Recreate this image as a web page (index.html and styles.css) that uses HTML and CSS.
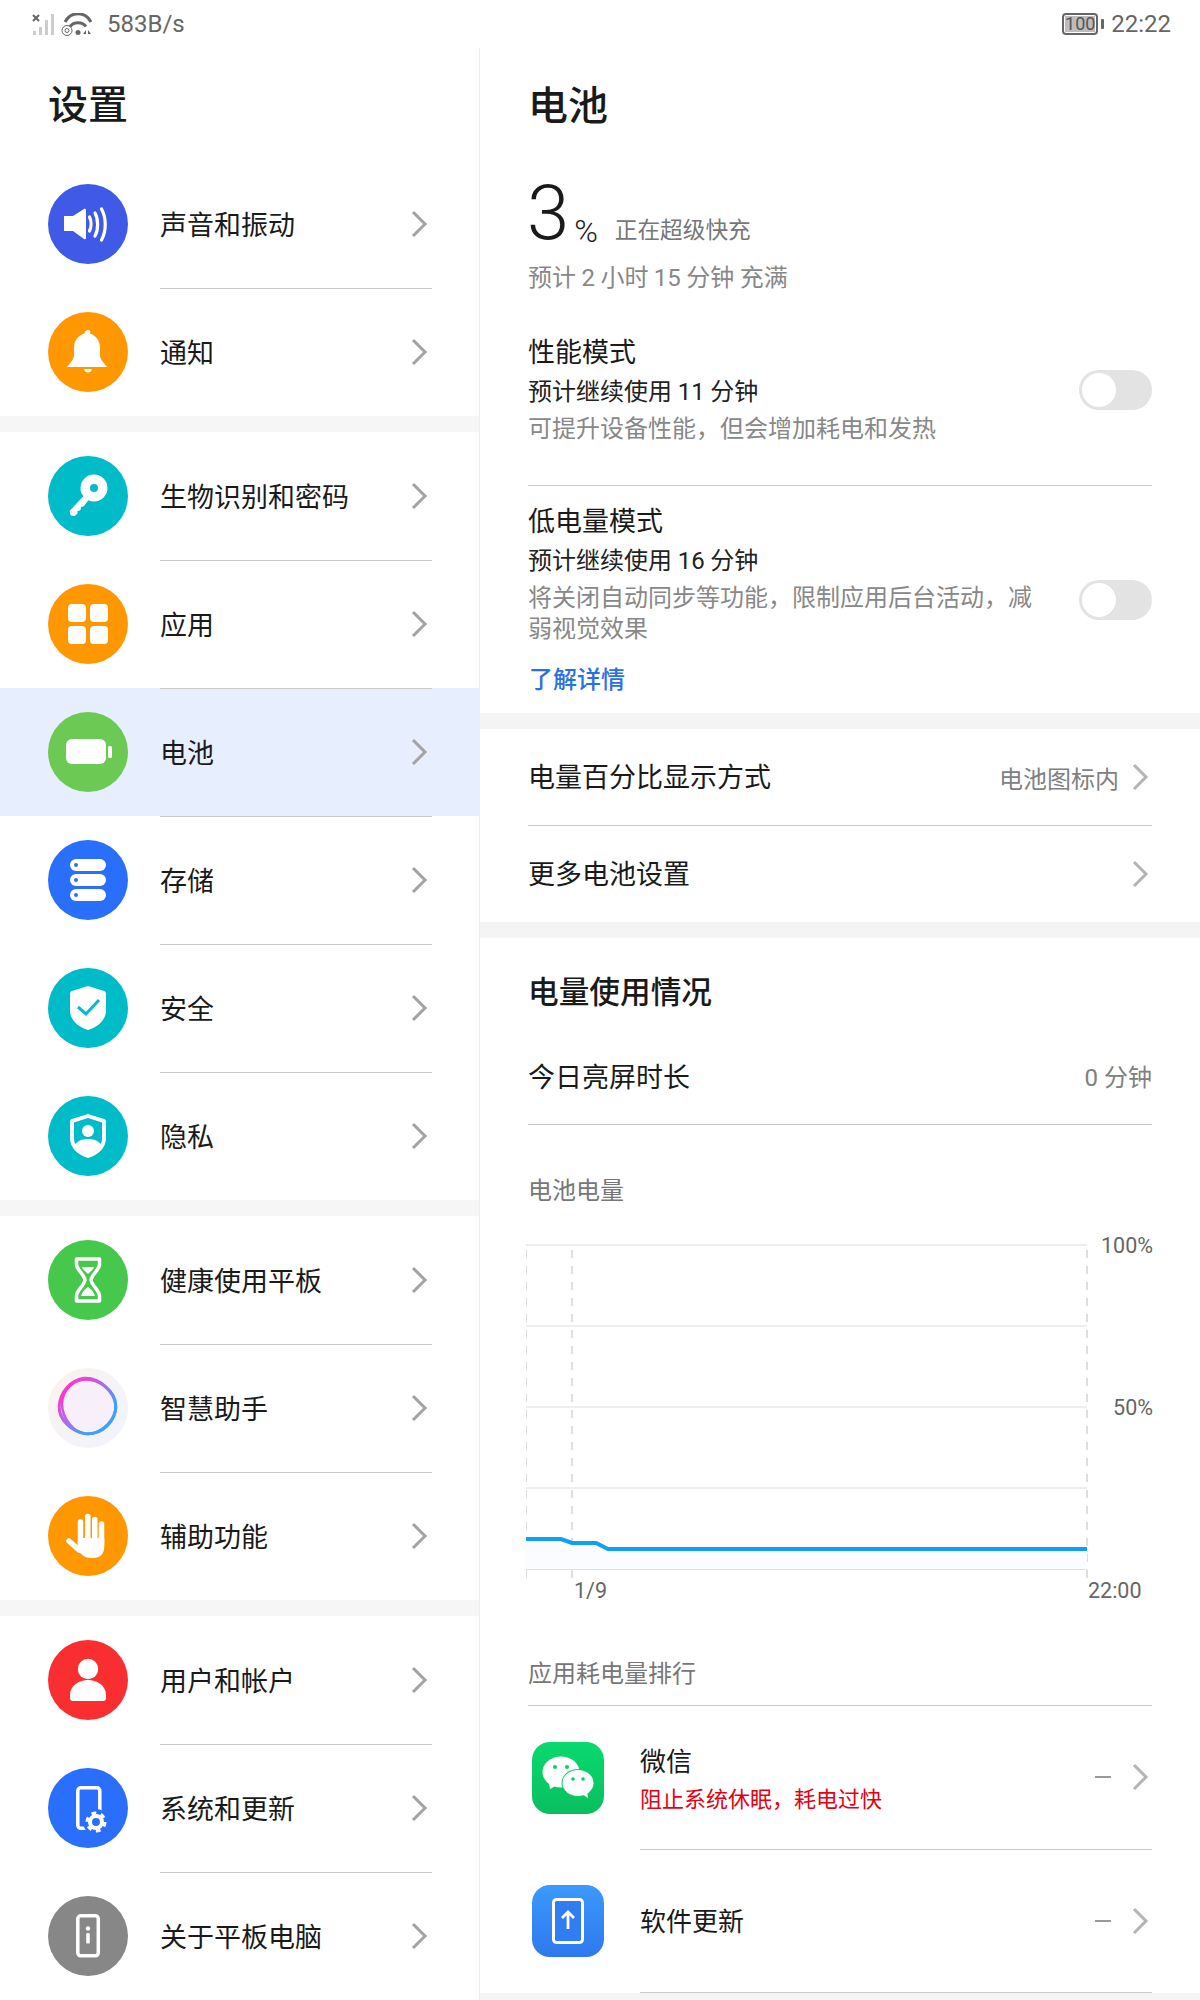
FILE: index.html
```html
<!DOCTYPE html>
<html lang="zh-CN">

<head>
    <meta charset="utf-8">
    <title>设置 - 电池</title>
    <link rel="stylesheet" href="styles.css">
</head>

<body>
    <header class="statusbar">
        <div class="status-left">
            <svg class="signal" viewBox="0 0 24 23">
                <path d="M1 2l6 6M7 2L1 8" class="signal-x"/>
                <path d="M2.500 22v-4M8.500 22v-8M14.500 22V7M20.500 22V1" class="signal-bars"/>
            </svg>
            <svg class="wifi" viewBox="0 0 32 23">
                <path d="M4 9C10 -2 24 -2 30 9M9 13.500C13 8.500 21 8.500 25 13.500" class="wifi-line"/>
                <circle cx="17" cy="19.500" r="2.500" class="wifi-dot"/>
                <circle cx="6" cy="17.500" r="5" class="wifi-thin"/>
                <circle cx="6" cy="17.500" r="2" class="wifi-thin"/>
                <path d="M22 21l3-4v4zM27 17l3 4h-3z" class="wifi-dot"/>
            </svg>
            <span class="speed">583B/s</span>
        </div>
        <div class="status-right">
            <span class="battery-level"><span class="battery-fill">100</span></span>
            <span class="battery-tip"></span>
            <span class="clock">22:22</span>
        </div>
    </header>

    <main class="layout">
        <aside class="sidebar">
            <h1 class="sidebar-title">设置</h1>

            <section class="menu-group">
                <div class="menu-row">
                    <svg class="menu-icon" viewBox="0 0 80 80">
                        <circle cx="40" cy="40" r="40" fill="#3f5ae6"/>
                        <path d="M16 32h9l11-7c1-.5 2 0 2 1v28c0 1-1 1.500-2 1l-11-8h-9z" fill="#fff"/>
                        <path d="M41.500 33c2 4 2 10 0 14M47 29c3.500 6 3.500 17 0 23M53.500 25c5 9 5 22 0 31" fill="none" stroke="#fff" stroke-width="3.200" stroke-linecap="round"/>
                    </svg>
                    <div class="menu-body"><span>声音和振动</span>
                        <svg class="chevron" viewBox="0 0 18 28"><path d="M3 2l12 12L3 26"/></svg>
                    </div>
                </div>
                <div class="menu-row">
                    <svg class="menu-icon" viewBox="0 0 80 80">
                        <circle cx="40" cy="40" r="40" fill="#ff9800"/>
                        <path d="M40 18c-2 0-3.500 1.500-3.500 3.500C30 23 26 29 26 36v7c0 4-3 7-7 12h40c-4-5-7-8-7-12v-7c0-7-4-13-10.500-14.500C43.500 19.500 42 18 40 18z" fill="#fff"/>
                        <path d="M36 57h8c-.5 2.500-2 3.500-4 3.500s-3.500-1-4-3.500z" fill="#fff"/>
                    </svg>
                    <div class="menu-body"><span>通知</span>
                        <svg class="chevron" viewBox="0 0 18 28"><path d="M3 2l12 12L3 26"/></svg>
                    </div>
                </div>
            </section>

            <section class="menu-group">
                <div class="menu-row">
                    <svg class="menu-icon" viewBox="0 0 80 80">
                        <circle cx="40" cy="40" r="40" fill="#00bcc9"/>
                        <circle cx="46" cy="32" r="13.500" fill="#fff"/>
                        <circle cx="46" cy="32" r="4" fill="#00bcc9"/>
                        <path d="M38 38L22 55l1 4 4 .5 2-2v-3l3-.5.500-3.500 3-.5 6-8z" fill="#fff" stroke="#fff" stroke-linejoin="round"/>
                    </svg>
                    <div class="menu-body"><span>生物识别和密码</span>
                        <svg class="chevron" viewBox="0 0 18 28"><path d="M3 2l12 12L3 26"/></svg>
                    </div>
                </div>
                <div class="menu-row">
                    <svg class="menu-icon" viewBox="0 0 80 80">
                        <circle cx="40" cy="40" r="40" fill="#ff9800"/>
                        <rect x="20" y="20" width="18" height="18" rx="4" fill="#fff"/>
                        <rect x="42" y="20" width="18" height="18" rx="4" fill="#fff"/>
                        <rect x="20" y="42" width="18" height="18" rx="4" fill="#fff"/>
                        <rect x="42" y="42" width="18" height="18" rx="4" fill="#fff"/>
                    </svg>
                    <div class="menu-body"><span>应用</span>
                        <svg class="chevron" viewBox="0 0 18 28"><path d="M3 2l12 12L3 26"/></svg>
                    </div>
                </div>
                <div class="menu-row valgt">
                    <svg class="menu-icon" viewBox="0 0 80 80">
                        <circle cx="40" cy="40" r="40" fill="#6cc953"/>
                        <rect x="18" y="27" width="40" height="25" rx="6" fill="#fff"/>
                        <rect x="60" y="34" width="4" height="12" rx="1.500" fill="#fff"/>
                    </svg>
                    <div class="menu-body"><span>电池</span>
                        <svg class="chevron" viewBox="0 0 18 28"><path d="M3 2l12 12L3 26"/></svg>
                    </div>
                </div>
                <div class="menu-row">
                    <svg class="menu-icon" viewBox="0 0 80 80">
                        <circle cx="40" cy="40" r="40" fill="#2a6ffb"/>
                        <rect x="22" y="19" width="36" height="12" rx="6" fill="#fff"/>
                        <rect x="22" y="34" width="36" height="12" rx="6" fill="#fff"/>
                        <rect x="22" y="49" width="36" height="12" rx="6" fill="#fff"/>
                        <circle cx="28" cy="25" r="2" fill="#2a6ffb"/>
                        <circle cx="28" cy="40" r="2" fill="#2a6ffb"/>
                        <circle cx="28" cy="55" r="2" fill="#2a6ffb"/>
                    </svg>
                    <div class="menu-body"><span>存储</span>
                        <svg class="chevron" viewBox="0 0 18 28"><path d="M3 2l12 12L3 26"/></svg>
                    </div>
                </div>
                <div class="menu-row">
                    <svg class="menu-icon" viewBox="0 0 80 80">
                        <circle cx="40" cy="40" r="40" fill="#00bcc9"/>
                        <path d="M40 18l16 5c1.500.5 2 1.500 2 3v16c0 10-8 17-18 20-10-3-18-10-18-20V26c0-1.500.5-2.500 2-3z" fill="#fff"/>
                        <path d="M30 39l8 7 13-14" fill="none" stroke="#00bcc9" stroke-width="3"/>
                    </svg>
                    <div class="menu-body"><span>安全</span>
                        <svg class="chevron" viewBox="0 0 18 28"><path d="M3 2l12 12L3 26"/></svg>
                    </div>
                </div>
                <div class="menu-row">
                    <svg class="menu-icon" viewBox="0 0 80 80">
                        <circle cx="40" cy="40" r="40" fill="#00bcc9"/>
                        <path d="M40 18l16 5c1.500.5 2 1.500 2 3v16c0 10-8 17-18 20-10-3-18-10-18-20V26c0-1.500.5-2.500 2-3z" fill="#fff"/>
                        <path d="M40 22l14 4.500V42c0 8-6 14-14 17-8-3-14-9-14-17V26.500z" fill="#00bcc9"/>
                        <circle cx="40" cy="35" r="6" fill="#fff"/>
                        <path d="M27 49c2-4 7-6 13-6s11 2 13 6c-3 5-8 8-13 11-5-3-10-6-13-11z" fill="#fff"/>
                    </svg>
                    <div class="menu-body"><span>隐私</span>
                        <svg class="chevron" viewBox="0 0 18 28"><path d="M3 2l12 12L3 26"/></svg>
                    </div>
                </div>
            </section>

            <section class="menu-group">
                <div class="menu-row">
                    <svg class="menu-icon" viewBox="0 0 80 80">
                        <circle cx="40" cy="40" r="40" fill="#46c84c"/>
                        <path d="M28.500 19h23v5c0 6-7.500 10-8.500 16 1 6 8.500 10 8.500 16v5h-23v-5c0-6 7.500-10 8.500-16-1-6-8.500-10-8.500-16z" fill="none" stroke="#fff" stroke-width="3.500" stroke-linejoin="round"/>
                        <path d="M34 27h12c-1 3-4 5-6 7-2-2-5-4-6-7zM40 47c3 2 6 5 7 9H33c1-4 4-7 7-9z" fill="#fff"/>
                    </svg>
                    <div class="menu-body"><span>健康使用平板</span>
                        <svg class="chevron" viewBox="0 0 18 28"><path d="M3 2l12 12L3 26"/></svg>
                    </div>
                </div>
                <div class="menu-row">
                    <svg class="menu-icon" viewBox="0 0 80 80">
                        <defs>
                            <linearGradient id="assistantBg" x1="0" y1="0" x2="1" y2="1">
                                <stop offset="0" stop-color="#fbf3ec"/>
                                <stop offset="1" stop-color="#f0f3ff"/>
                            </linearGradient>
                            <linearGradient id="assistantRing" x1="0.100" y1="0.200" x2="0.800" y2="0.900">
                                <stop offset="0" stop-color="#fa38d0"/>
                                <stop offset="0.450" stop-color="#a86df0"/>
                                <stop offset="0.800" stop-color="#3f9ffb"/>
                            </linearGradient>
                        </defs>
                        <circle cx="40" cy="40" r="40" fill="url(#assistantBg)"/>
                        <circle cx="40" cy="39" r="27" fill="#f7effa"/>
                        <path d="M14 36C14 22 26 11 38 11C50 11 68 22 68 38C68 54 54 66 40 66C26 66 14 50 14 36z" fill="none" stroke="url(#assistantRing)" stroke-width="2.500"/>
                        <path d="M11 38C12 24 22 12 36 10C52 9 68 24 68 40C66 56 52 67 38 66C24 64 10 52 11 38z" fill="none" stroke="url(#assistantRing)" stroke-width="2.500"/>
                        <path d="M12 34C16 20 28 10 42 12C56 14 69 28 67 42C64 56 50 67 36 65C22 62 9 48 12 34z" fill="none" stroke="url(#assistantRing)" stroke-width="2"/>
                    </svg>
                    <div class="menu-body"><span>智慧助手</span>
                        <svg class="chevron" viewBox="0 0 18 28"><path d="M3 2l12 12L3 26"/></svg>
                    </div>
                </div>
                <div class="menu-row">
                    <svg class="menu-icon" viewBox="0 0 80 80">
                        <circle cx="40" cy="40" r="40" fill="#ff9800"/>
                        <path d="M32.500 26v20M39.800 20.500v24M46.800 23.500v21M53.500 28v20M21 45l10 9" stroke="#fff" stroke-width="5.500" stroke-linecap="round"/>
                        <path d="M30 42h26.300v8c0 8-4 12-11 12h-3c-6 0-9-4-13-8z" fill="#fff"/>
                    </svg>
                    <div class="menu-body"><span>辅助功能</span>
                        <svg class="chevron" viewBox="0 0 18 28"><path d="M3 2l12 12L3 26"/></svg>
                    </div>
                </div>
            </section>

            <section class="menu-group">
                <div class="menu-row">
                    <svg class="menu-icon" viewBox="0 0 80 80">
                        <circle cx="40" cy="40" r="40" fill="#f92e30"/>
                        <circle cx="40" cy="29" r="10.200" fill="#fff"/>
                        <path d="M22 55c0-10 10-15 18-15s18 5 18 15v3a3 3 0 0 1-3 3H25a3 3 0 0 1-3-3z" fill="#fff"/>
                    </svg>
                    <div class="menu-body"><span>用户和帐户</span>
                        <svg class="chevron" viewBox="0 0 18 28"><path d="M3 2l12 12L3 26"/></svg>
                    </div>
                </div>
                <div class="menu-row">
                    <svg class="menu-icon" viewBox="0 0 80 80">
                        <circle cx="40" cy="40" r="40" fill="#2a6ffb"/>
                        <rect x="29.800" y="19.800" width="22" height="40.500" rx="3" fill="none" stroke="#fff" stroke-width="3.500"/>
                        <circle cx="48" cy="54" r="13" fill="#2a6ffb"/>
                        <circle cx="48" cy="54" r="6" fill="none" stroke="#fff" stroke-width="4"/>
                        <circle cx="48" cy="54" r="9" fill="none" stroke="#fff" stroke-width="3" stroke-dasharray="4.700 4.720"/>
                    </svg>
                    <div class="menu-body"><span>系统和更新</span>
                        <svg class="chevron" viewBox="0 0 18 28"><path d="M3 2l12 12L3 26"/></svg>
                    </div>
                </div>
                <div class="menu-row">
                    <svg class="menu-icon" viewBox="0 0 80 80">
                        <circle cx="40" cy="40" r="40" fill="#878787"/>
                        <rect x="29.800" y="19.800" width="20.500" height="40" rx="3" fill="none" stroke="#fff" stroke-width="3.500"/>
                        <circle cx="40" cy="32.500" r="2.200" fill="#fff"/>
                        <rect x="38.200" y="37" width="3.600" height="10.500" rx="1" fill="#fff"/>
                    </svg>
                    <div class="menu-body"><span>关于平板电脑</span>
                        <svg class="chevron" viewBox="0 0 18 28"><path d="M3 2l12 12L3 26"/></svg>
                    </div>
                </div>
            </section>
        </aside>

        <section class="detail">
            <div class="block">
                <h1 class="detail-title">电池</h1>
                <div class="charge">
                    <span class="charge-num">3</span>
                    <span class="charge-unit">%</span>
                    <span class="charge-state">正在超级快充</span>
                </div>
                <p class="charge-time">预计 2 小时 15 分钟 充满</p>

                <div class="mode mode-first">
                    <div class="mode-text">
                        <p class="mode-name">性能模式</p>
                        <p class="mode-time">预计继续使用 11 分钟</p>
                        <p class="mode-desc">可提升设备性能，但会增加耗电和发热</p>
                    </div>
                    <span class="toggle"></span>
                </div>
                <div class="mode">
                    <div class="mode-text">
                        <p class="mode-name">低电量模式</p>
                        <p class="mode-time">预计继续使用 16 分钟</p>
                        <p class="mode-desc">将关闭自动同步等功能，限制应用后台活动，减弱视觉效果</p>
                        <a class="mode-link">了解详情</a>
                    </div>
                    <span class="toggle"></span>
                </div>
            </div>

            <div class="block gap-top">
                <div class="line line-first">
                    <span>电量百分比显示方式</span>
                    <span class="line-right"><span class="line-value">电池图标内</span>
                        <svg class="chevron chevron-light" viewBox="0 0 18 28"><path d="M3 2l12 12L3 26"/></svg>
                    </span>
                </div>
                <div class="line line-last">
                    <span>更多电池设置</span>
                    <span class="line-right">
                        <svg class="chevron chevron-light" viewBox="0 0 18 28"><path d="M3 2l12 12L3 26"/></svg>
                    </span>
                </div>
            </div>

            <div class="block gap-top usage">
                <h2 class="usage-title">电量使用情况</h2>
                <div class="line line-screen">
                    <span>今日亮屏时长</span>
                    <span class="line-value">0 分钟</span>
                </div>
                <h3 class="sub-title">电池电量</h3>

                <svg class="chart" viewBox="526 1230 630 380">
                    <path d="M526 1245H1087M526 1326H1087M526 1407H1087M526 1488H1087" class="chart-grid"/>
                    <path d="M526 1569H1087" class="chart-base"/>
                    <path d="M526 1250V1578M572 1250V1578M1087 1250V1578" class="chart-dash"/>
                    <path d="M526 1539H561L572 1543H596L608 1549H1087V1569H526z" class="chart-area"/>
                    <path d="M526 1539H561L572 1543H596L608 1549H1087" class="chart-line"/>
                    <text x="1153" y="1253" text-anchor="end" class="chart-label">100%</text>
                    <text x="1153" y="1415" text-anchor="end" class="chart-label">50%</text>
                    <text x="574" y="1598" class="chart-label">1/9</text>
                    <text x="1088" y="1598" class="chart-label">22:00</text>
                </svg>

                <h3 class="sub-title rank-title">应用耗电量排行</h3>

                <div class="app-row">
                    <svg class="app-icon" viewBox="0 0 72 72">
                        <defs>
                            <linearGradient id="wechatBg" x1="0" y1="0" x2="0" y2="1">
                                <stop offset="0" stop-color="#0ad96e"/>
                                <stop offset="1" stop-color="#08bf5f"/>
                            </linearGradient>
                            <linearGradient id="updateBg" x1="0" y1="0" x2="0" y2="1">
                                <stop offset="0" stop-color="#3b99fc"/>
                                <stop offset="1" stop-color="#2e78ee"/>
                            </linearGradient>
                        </defs>
                        <rect width="72" height="72" rx="18" fill="url(#wechatBg)"/>
                        <ellipse cx="29" cy="30" rx="18.500" ry="15.500" fill="#fff"/>
                        <path d="M17 41l1 6 7-4z" fill="#fff"/>
                        <circle cx="23" cy="25" r="2" fill="#0ad069"/>
                        <circle cx="35" cy="25" r="2" fill="#0ad069"/>
                        <ellipse cx="46" cy="41" rx="16.500" ry="14" fill="#0ace67"/>
                        <ellipse cx="46" cy="41" rx="15.500" ry="13" fill="#fff"/>
                        <path d="M50 52l6 4-1-7z" fill="#fff"/>
                        <circle cx="41" cy="37" r="1.800" fill="#0ad069"/>
                        <circle cx="51" cy="37" r="1.800" fill="#0ad069"/>
                    </svg>
                    <div class="app-body">
                        <div class="app-text app-text-two">
                            <p class="app-name">微信</p>
                            <p class="app-warn">阻止系统休眠，耗电过快</p>
                        </div>
                        <span class="app-dash"></span>
                        <svg class="chevron chevron-light" viewBox="0 0 18 28"><path d="M3 2l12 12L3 26"/></svg>
                    </div>
                </div>
                <div class="app-row">
                    <svg class="app-icon" viewBox="0 0 72 72">
                        <rect width="72" height="72" rx="18" fill="url(#updateBg)"/>
                        <rect x="21.500" y="14.500" width="29" height="43" rx="3" fill="#2f7df0" stroke="#fff" stroke-width="3"/>
                        <path d="M36 44V28M30 33l6-6 6 6" fill="none" stroke="#fff" stroke-width="2.800"/>
                    </svg>
                    <div class="app-body">
                        <div class="app-text">
                            <p class="app-name">软件更新</p>
                        </div>
                        <span class="app-dash"></span>
                        <svg class="chevron chevron-light" viewBox="0 0 18 28"><path d="M3 2l12 12L3 26"/></svg>
                    </div>
                </div>
            </div>
        </section>
    </main>
</body>

</html>
```

FILE: styles.css
```css
* {
    box-sizing: border-box;
}

body {
    margin: 0;
    width: 1200px;
    height: 2000px;
    overflow: hidden;
    background-color: #fff;
    color: #1a1a1a;
    font-family: Roboto, "Noto Sans CJK SC", sans-serif;
    font-size: 27px;
}

h1,
h2,
h3,
p {
    margin: 0;
}

/* status bar */

.statusbar {
    display: flex;
    justify-content: space-between;
    align-items: center;
    height: 48px;
    padding: 0 29px 0 32px;
    color: #666;
    font-size: 24px;
}

.status-left,
.status-right {
    display: flex;
    align-items: center;
}

.signal {
    width: 24px;
    height: 23px;
}

.signal-x {
    fill: none;
    stroke: #666;
    stroke-width: 2;
}

.signal-bars {
    fill: none;
    stroke: #ccc;
    stroke-width: 3;
}

.wifi {
    width: 32px;
    height: 23px;
    margin-left: 5px;
}

.wifi-line {
    fill: none;
    stroke: #666;
    stroke-width: 3;
}

.wifi-dot {
    fill: #666;
}

.wifi-thin {
    fill: none;
    stroke: #666;
    stroke-width: 1;
}

.speed {
    margin-left: 14px;
}

.battery-level {
    display: flex;
    justify-content: center;
    align-items: center;
    width: 36px;
    height: 22px;
    border: 2px solid #666;
    border-radius: 4px;
    padding: 1px;
}

.battery-fill {
    flex: 1;
    height: 16px;
    background-color: #bdbdbd;
    color: #555;
    font-size: 18px;
    line-height: 16px;
    text-align: center;
}

.battery-tip {
    width: 3px;
    height: 10px;
    margin-left: 3px;
    background-color: #666;
    border-radius: 1px;
}

.clock {
    margin-left: 7px;
}

.layout {
    display: flex;
}

/* left menu */

.sidebar {
    flex: 0 0 480px;
    height: 1952px;
    background-color: #f6f6f6;
    border-right: 1px solid #eee;
}

.sidebar-title {
    height: 112px;
    padding: 33px 0 0 48px;
    background-color: #fff;
    font-size: 40px;
    line-height: 50px;
    font-weight: 500;
}

.menu-group {
    background-color: #fff;
    margin-bottom: 16px;
}

.menu-row {
    display: flex;
    align-items: center;
    height: 128px;
    padding-left: 48px;
}

.menu-icon {
    flex: 0 0 80px;
    width: 80px;
    height: 80px;
    margin-right: 32px;
}

.menu-body {
    display: flex;
    flex: 1;
    justify-content: space-between;
    align-items: center;
    height: 128px;
    margin-right: 47px;
    padding-right: 4px;
    padding-bottom: 3px;
    border-top: 1px solid #c9c9c9;
}

.menu-row:first-child .menu-body {
    border-top-color: transparent;
}

.valgt {
    background-color: #e7eefd;
}

.chevron {
    width: 18px;
    height: 28px;
    fill: none;
    stroke: #a3a3a3;
    stroke-width: 3;
}

.menu-body .chevron {
    position: relative;
    top: 1px;
}

.chevron-light {
    stroke: #b4b4b4;
}

/* right panel */

.detail {
    flex: 0 0 720px;
    min-width: 0;
    background-color: #f4f4f4;
}

.block {
    background-color: #fff;
    padding: 0 48px;
}

.gap-top {
    margin-top: 16px;
}

.detail-title {
    padding-top: 35px;
    margin-bottom: -1px;
    font-size: 40px;
    line-height: 48px;
    font-weight: 500;
}

.charge {
    display: flex;
    align-items: baseline;
    height: 76px;
    margin-top: 45px;
}

.charge-num {
    margin-left: -1px;
    font-size: 76px;
    line-height: 76px;
    font-weight: 300;
}

.charge-unit {
    margin-left: 5px;
    font-size: 32px;
    line-height: 30px;
    font-weight: 300;
    position: relative;
    top: 3px;
}

.charge-state {
    margin-left: 17px;
    color: #777;
    font-size: 22.67px;
    position: relative;
    top: -1px;
}

.charge-time {
    margin-top: 10px;
    color: #888;
    font-size: 24px;
    line-height: 34px;
    word-spacing: -.5px;
}

.mode {
    display: flex;
    justify-content: space-between;
    align-items: center;
    padding-top: 17px;
    padding-bottom: 16px;
}

.mode-first {
    margin-top: 39px;
    padding-top: 0;
    padding-bottom: 40px;
    border-bottom: 1px solid #c9c9c9;
}

.mode-text {
    width: 520px;
}

.mode-name {
    line-height: 38px;
}

.mode-time {
    color: #222;
    font-size: 24px;
    line-height: 40px;
    word-spacing: -.3px;
}

.mode-desc {
    margin-top: 2px;
    color: #888;
    font-size: 24px;
    line-height: 31px;
}

.mode-link {
    display: block;
    margin-top: 18px;
    margin-left: 1px;
    color: #2a6fe6;
    font-size: 24px;
    line-height: 34px;
    font-weight: 500;
}

.toggle {
    position: relative;
    flex: 0 0 73px;
    height: 40px;
    background-color: #e3e3e3;
    border-radius: 20px;
}

.toggle::after {
    content: "";
    position: absolute;
    top: 3px;
    left: 3px;
    width: 34px;
    height: 34px;
    background-color: #fff;
    border-radius: 50%;
}

.line {
    display: flex;
    justify-content: space-between;
    align-items: center;
    padding-bottom: 4px;
}

.line-first {
    height: 97px;
    border-bottom: 1px solid #c9c9c9;
}

.line-last {
    height: 96px;
}

.line-right {
    display: flex;
    align-items: center;
    gap: 12px;
    padding-right: 3px;
    position: relative;
    top: 2px;
}

.line-value {
    color: #808080;
    font-size: 24px;
}

.usage {
    overflow: hidden;
}

.usage-title {
    margin-top: 33px;
    margin-bottom: -1px;
    font-size: 30.67px;
    line-height: 44px;
    font-weight: 500;
}

.line-screen {
    height: 95px;
    margin-top: 16px;
    border-bottom: 1px solid #c9c9c9;
}

.sub-title {
    margin-top: 49px;
    margin-bottom: -1px;
    color: #777;
    font-size: 24px;
    line-height: 34px;
    font-weight: 400;
}

.chart {
    display: block;
    width: 630px;
    height: 380px;
    margin-top: 23px;
    margin-left: -2px;
}

.chart-grid {
    fill: none;
    stroke: #eee;
    stroke-width: 2;
}

.chart-base {
    fill: none;
    stroke: #e2e2e2;
    stroke-width: 2;
}

.chart-dash {
    fill: none;
    stroke: #dedede;
    stroke-width: 2;
    stroke-dasharray: 8 8;
}

.chart-area {
    fill: #fafcff;
}

.chart-line {
    fill: none;
    stroke: #0ea0f5;
    stroke-width: 4;
}

.chart-label {
    fill: #666;
    font-size: 21.5px;
}

.rank-title {
    margin-top: 47px;
    margin-bottom: 0;
    padding-bottom: 14px;
    border-bottom: 1px solid #c9c9c9;
    height: 49px;
}

.app-row {
    display: flex;
    align-items: center;
    height: 143.5px;
}

.app-icon {
    flex: 0 0 72px;
    width: 72px;
    height: 72px;
    margin-left: 4px;
    margin-right: 36px;
}

.app-body {
    display: flex;
    flex: 1;
    align-items: center;
    height: 100%;
    padding-right: 3px;
    border-bottom: 1px solid #c9c9c9;
}

.app-text {
    flex: 1;
    margin-top: 2px;
}

.app-text-two {
    margin-top: 7px;
}

.app-name {
    font-size: 26px;
    line-height: 38px;
}

.app-warn {
    color: #e60012;
    font-size: 22px;
    line-height: 38px;
}

.app-dash {
    width: 16px;
    height: 2px;
    margin-right: 20px;
    background-color: #999;
}
```
